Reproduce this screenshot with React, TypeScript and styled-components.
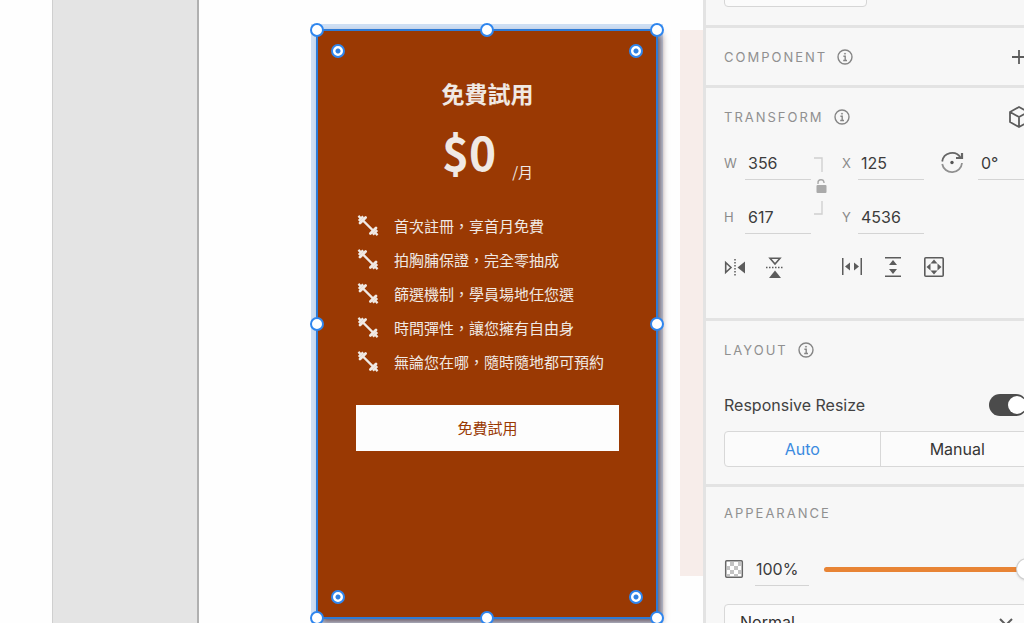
import React from 'react';
import styled, { createGlobalStyle } from 'styled-components';

const Global = createGlobalStyle`
  * { box-sizing: border-box; }
  body { margin: 0; overflow: hidden; background: #fefefe; font-family: Inter, "Liberation Sans", sans-serif; }
  button, input, select { font: inherit; color: inherit; margin: 0; }
  h2, h3, p, ul { margin: 0; padding: 0; }
  svg { display: block; flex: none; }
`;

const Workspace = styled.div`
  display: grid;
  grid-template-columns: 52px 147px minmax(0, 1fr) 321px;
  height: 100vh;
  overflow: hidden;
`;

const Pasteboard = styled.div`
  grid-column: 2;
  background: #e4e4e4;
  border-left: 1px solid #cfcfcf;
  border-right: 2px solid #b0b0b0;
`;

const Canvas = styled.main`
  display: flex;
  align-items: flex-start;
  padding: 30px 0 0 118px;
  overflow: hidden;
`;

const Neighbour = styled.div`
  flex: 1;
  height: 546px;
  margin-left: 23px;
  background: #f7edea;
`;

const Card = styled.section`
  position: relative;
  flex: none;
  display: flex;
  flex-direction: column;
  align-items: stretch;
  width: 340px;
  height: 588px;
  padding: 43px 38px 0 39px;
  background: #9a3903;
  color: #f0e9e4;
  font-family: "Noto Sans CJK TC", sans-serif;
  box-shadow: inset 0 0 0 1px #2e7bd6, 0 0 0 1px #2e7bd6, 4px 4px 7px rgba(60, 20, 20, 0.7), 0 0 0 6px #cfe0f5;
`;

const PlanName = styled.h2`
  font-size: 23px;
  line-height: 40px;
  font-weight: 700;
  text-align: center;
`;

const Price = styled.p`
  display: flex;
  justify-content: center;
  align-items: flex-end;
  gap: 16px;
  height: 72px;
`;

const Amount = styled.strong`
  font-size: 46px;
  line-height: 76px;
  font-weight: 700;
  align-self: flex-start;
`;

const Period = styled.span`
  font-size: 15px;
  line-height: 26px;
  font-weight: 400;
`;

const Features = styled.ul`
  list-style: none;
  margin-top: 23px;
`;

const Feature = styled.li`
  display: flex;
  align-items: center;
  gap: 15px;
  height: 34px;
  padding-left: 1px;
  font-size: 15px;
  white-space: nowrap;
`;

const TrialButton = styled.button`
  height: 46px;
  margin-top: 27px;
  padding: 0 0 2px;
  border: 0;
  background: #fdfdfd;
  && { color: #9a3903; font-size: 15px; }
`;

const Handle = styled.i<{ $x: string; $y: string }>`
  position: absolute;
  left: ${(p) => p.$x};
  top: ${(p) => p.$y};
  width: 14px;
  height: 14px;
  transform: translate(-50%, -50%);
  border: 2px solid #2f86ee;
  border-radius: 50%;
  background: #fff;
`;

const RadiusHandle = styled(Handle)`
  background: radial-gradient(circle, #2f80e0 2px, #fff 3px);
`;

const Inspector = styled.aside`
  overflow: hidden;
  background: #f7f7f7;
  border-left: 3px solid #e3e3e3;
  color: #424242;
`;

const Section = styled.section<{ $h: number }>`
  display: flow-root;
  width: 350px;
  height: ${(p) => p.$h}px;
  padding: 0 19px 0 18px;
  border-bottom: 3px solid #e3e3e3;
`;

const FieldStub = styled.input`
  display: block;
  width: 143px;
  height: 36px;
  && { margin-top: -29px; }
  border: 1px solid #d6d6d6;
  border-radius: 4px;
  background: #fbfbfb;
`;

const SectionHead = styled.header<{ $h: number }>`
  display: flex;
  align-items: center;
  gap: 10px;
  height: ${(p) => p.$h}px;
`;

const SectionTitle = styled.h3`
  color: #909090;
  font-size: 13px;
  line-height: 20px;
  font-weight: 400;
  letter-spacing: 2px;
`;

const IconButton = styled.button`
  display: flex;
  align-items: center;
  justify-content: center;
  width: 24px;
  height: 24px;
  padding: 0;
  border: 0;
  background: none;
  && { margin: 0 6px 0 auto; color: #5c5c5c; }
`;

const TransformGrid = styled.div`
  display: grid;
  grid-template-columns: 87px 31px 82px 16px 90px;
  grid-template-rows: 34px 34px;
  row-gap: 20px;
`;

const Field = styled.label<{ $lead?: number }>`
  display: grid;
  grid-template-columns: ${(p) => p.$lead ?? 21}px 66px;
  align-items: center;
  width: max-content;
  color: #8a8a8a;
  font-size: 13px;
`;

const ValueInput = styled.input`
  width: 100%;
  height: 34px;
  padding: 0 0 0 3px;
  border: 0;
  border-bottom: 1px solid #d4d4d4;
  background: none;
  outline: 0;
  && { color: #3c3c3c; font-size: 16px; }
`;

const OpacityInput = styled(ValueInput)`
  padding: 0 0 0 1px;
`;

const LinkRatio = styled.div`
  grid-row: 1 / 3;
  grid-column: 2;
  padding: 11px 0 0 2px;
`;

const Rotation = styled(Field)`
  grid-column: 5;
`;

const ToolRow = styled.div<{ $gap: number }>`
  display: flex;
  align-items: center;
  gap: ${(p) => p.$gap}px;
`;

const Tools = styled.div`
  display: grid;
  grid-template-columns: 117px auto;
  justify-content: start;
  margin-top: 21px;
`;

const ToolButton = styled(IconButton)`
  width: 22px;
  &&& { margin: 0; }
`;

const ResizeRow = styled.label`
  display: flex;
  align-items: center;
  justify-content: space-between;
  height: 24px;
  margin-top: 14px;
  font-size: 16px;
`;

const Switch = styled.input`
  appearance: none;
  width: 38px;
  height: 22px;
  border-radius: 11px;
  background: #4b4b4b;
  && { margin-right: 10px; }
  &::before {
    content: "";
    display: block;
    width: 18px;
    height: 18px;
    margin: 2px 0 0 19px;
    border-radius: 50%;
    background: #fff;
  }
`;

const Segments = styled.div`
  display: grid;
  grid-template-columns: 1fr 1fr;
  height: 36px;
  margin: 14px 2px 0 0;
  border: 1px solid #d8d8d8;
  border-radius: 4px;
  background: #fbfbfb;
`;

const Segment = styled.button<{ $active?: boolean }>`
  border: 0;
  background: none;
  && { color: ${(p) => (p.$active ? '#3a8ae0' : '#363636')}; font-size: 16px; }
  & + & { border-left: 1px solid #d8d8d8; }
`;

const OpacityRow = styled.div`
  display: grid;
  grid-template-columns: 31px 54px 1fr;
  align-items: center;
  margin-top: 13px;
`;

const Slider = styled.input`
  appearance: none;
  width: 213px;
  height: 20px;
  background: none;
  && { margin-left: 15px; }
  &::-webkit-slider-runnable-track {
    height: 5px;
    border-radius: 3px;
    background: #e88435;
  }
  &::-webkit-slider-thumb {
    appearance: none;
    width: 20px;
    height: 20px;
    margin-top: -8px;
    border-radius: 50%;
    background: #fff;
    box-shadow: 0 0 0 1px #cfcfcf, 0 1px 3px rgba(0, 0, 0, 0.3);
  }
`;

const BlendWrap = styled.div`
  position: relative;
  margin-top: 18px;
  & > svg { position: absolute; left: 274px; top: 10px; }
`;

const BlendSelect = styled.select`
  appearance: none;
  display: block;
  width: 100%;
  height: 36px;
  padding: 0 15px;
  border: 1px solid #d8d8d8;
  border-radius: 4px;
  background: #fbfbfb;
  && { color: #303030; font-size: 16px; }
`;

const Info = () => (
  <svg width="16" height="16" viewBox="0 0 16 16" fill="none" stroke="#858585" strokeWidth="1.4">
    <circle cx="8" cy="8" r="7" />
    <path d="M6.4 7.2H8.2V11.4M6.2 11.5H10" />
    <circle cx="8" cy="4.7" r=".6" fill="#858585" strokeWidth=".7" />
  </svg>
);

const Dumbbell = () => (
  <svg width="22" height="22" viewBox="0 0 22 22" fill="none" stroke="currentColor">
    <path d="M6 6.500L16 16.500" strokeWidth="2.4" />
    <path d="M3 9L8.600 3.400M13.400 19.600L19 14" strokeWidth="2.8" strokeLinecap="round" />
    <path d="M1.800 6.800L6.200 2.400M15.800 20.600L20.200 16.200" strokeWidth="2.6" />
    <path d="M1.400 1.900L4.600 5.100M17.400 17.900L20.600 21.100" strokeWidth="2.2" />
  </svg>
);

const features = ['首次註冊，享首月免費', '拍胸脯保證，完全零抽成', '篩選機制，學員場地任您選', '時間彈性，讓您擁有自由身', '無論您在哪，隨時隨地都可預約'];
const handles = [['0%', '0%'], ['50%', '0%'], ['100%', '0%'], ['0%', '50%'], ['100%', '50%'], ['0%', '100%'], ['50%', '100%'], ['100%', '100%']];
const radii = [['21px', '21px'], ['calc(100% - 21px)', '21px'], ['21px', 'calc(100% - 21px)'], ['calc(100% - 21px)', 'calc(100% - 21px)']];

function Head({ title, info = true, height = 58, children }: { title: string; info?: boolean; height?: number; children?: React.ReactNode }) {
  return (
    <SectionHead $h={height}>
      <SectionTitle>{title}</SectionTitle>
      {info && <Info />}
      {children}
    </SectionHead>
  );
}

export default function App() {
  return (
    <Workspace>
      <Global />
      <Pasteboard />
      <Canvas>
        <Card lang="zh-Hant">
          <PlanName>免費試用</PlanName>
          <Price><Amount>$0</Amount><Period>/月</Period></Price>
          <Features>
            {features.map((f) => <Feature key={f}><Dumbbell />{f}</Feature>)}
          </Features>
          <TrialButton>免費試用</TrialButton>
          {handles.map(([x, y]) => <Handle key={x + y} $x={x} $y={y} />)}
          {radii.map(([x, y]) => <RadiusHandle key={x + y} $x={x} $y={y} />)}
        </Card>
        <Neighbour />
      </Canvas>
      <Inspector>
        <Section $h={28}><FieldStub aria-label="Value" /></Section>
        <Section $h={60}>
          <Head title="COMPONENT">
            <IconButton aria-label="Add component">
              <svg width="16" height="16" viewBox="0 0 16 16" stroke="currentColor" strokeWidth="1.8"><path d="M8 1V15M1 8H15" /></svg>
            </IconButton>
          </Head>
        </Section>
        <Section $h={233}>
          <Head title="TRANSFORM">
            <IconButton aria-label="3D transforms">
              <svg width="22" height="24" viewBox="0 0 22 24" fill="none" stroke="currentColor" strokeWidth="1.8" strokeLinejoin="round"><path d="M11 2L20 7V17L11 22L2 17V7ZM2 7L11 12L20 7M11 12V22" /></svg>
            </IconButton>
          </Head>
          <TransformGrid>
            <Field>W<ValueInput defaultValue="356" /></Field>
            <LinkRatio>
              <svg width="16" height="60" viewBox="0 0 16 60" fill="none" stroke="#d0d0d0" strokeWidth="1.4">
                <path d="M1 1H9V15M9 44V57H1" />
                <path d="M5 27V26A3 3 0 0 1 11 25.500V26" stroke="#aaa" />
                <rect x="3.500" y="28" width="10" height="8" rx="1" fill="#aaa" stroke="none" />
              </svg>
            </LinkRatio>
            <Field $lead={16}>X<ValueInput defaultValue="125" /></Field>
            <Rotation $lead={38}>
              <svg width="24" height="24" viewBox="0 0 24 24" fill="none" stroke="#666" strokeWidth="1.8">
                <path d="M2.200 10.500A10 10 0 0 1 20.500 6.500" />
                <path d="M22 12A10 10 0 0 1 2.200 13" stroke="#909090" />
                <path d="M22 2V7H16" strokeWidth="2.2" />
                <circle cx="12" cy="11.500" r="1.700" fill="#555" stroke="none" />
              </svg>
              <ValueInput aria-label="Rotation" defaultValue="0°" />
            </Rotation>
            <Field>H<ValueInput defaultValue="617" /></Field>
            <Field $lead={16}>Y<ValueInput defaultValue="4536" /></Field>
          </TransformGrid>
          <Tools>
            <ToolRow $gap={18}>
              <ToolButton aria-label="Flip horizontally"><svg width="22" height="20" viewBox="0 0 22 20" fill="none" stroke="#5c5c5c"><path d="M1.700 5.500L7 10.500L1.700 15.500Z" strokeWidth="1.600" /><path d="M11 2V20" strokeDasharray="1.500 1.500" strokeWidth="1.500" /><path d="M21 4.500V16.500L13.500 10.500Z" fill="#5c5c5c" stroke="none" /></svg></ToolButton>
              <ToolButton aria-label="Flip vertically"><svg width="20" height="22" viewBox="0 0 20 22" fill="none" stroke="#5c5c5c"><path d="M5 2.200H15L10 8Z" strokeWidth="1.600" /><path d="M1 11.500H19" strokeDasharray="1.500 1.500" strokeWidth="1.500" /><path d="M4 22H16L10 14.500Z" fill="#5c5c5c" stroke="none" /></svg></ToolButton>
            </ToolRow>
            <ToolRow $gap={19}>
              <ToolButton aria-label="Fix width"><svg width="22" height="20" viewBox="0 0 22 20" fill="#5c5c5c"><path d="M1 1H2.500V18H1ZM19.500 1H21V18H19.500ZM4 9.500L9 5.500V13.500ZM18 9.500L13 5.500V13.500Z" /></svg></ToolButton>
              <ToolButton aria-label="Fix height"><svg width="20" height="22" viewBox="0 0 20 22" fill="#5c5c5c"><path d="M2 1H18V2.500H2ZM2 19.500H18V21H2ZM10 4L14 9H6ZM10 18L14 13H6Z" /></svg></ToolButton>
              <ToolButton aria-label="Responsive"><svg width="22" height="22" viewBox="0 0 22 22" fill="#5c5c5c"><rect x="1.800" y="1.800" width="18.400" height="18.400" rx="1" fill="none" stroke="#5c5c5c" strokeWidth="1.600" /><path d="M11 3.500L14.500 7.500H7.500ZM11 18.500L14.500 14.500H7.500ZM3.500 11L7.500 7.500V14.500ZM18.500 11L14.500 7.500V14.500Z" /></svg></ToolButton>
            </ToolRow>
          </Tools>
        </Section>
        <Section $h={166}>
          <Head title="LAYOUT" />
          <ResizeRow>Responsive Resize<Switch type="checkbox" role="switch" defaultChecked /></ResizeRow>
          <Segments>
            <Segment $active>Auto</Segment>
            <Segment>Manual</Segment>
          </Segments>
        </Section>
        <Section $h={200}>
          <Head title="APPEARANCE" info={false} height={52} />
          <OpacityRow>
            <svg width="20" height="20" viewBox="0 0 20 20">
              <rect x="1.700" y="1.700" width="16.600" height="16.600" rx="1" fill="#fff" stroke="#666" strokeWidth="1.500" />
              <path d="M6 3h4v4H6zM14 3h3v4h-3zM3 7h3v4H3zM10 7h4v4h-4zM6 11h4v4H6zM14 11h3v4h-3zM3 15h3v2H3zM10 15h4v2h-4z" fill="#c4c4c4" />
            </svg>
            <OpacityInput aria-label="Opacity" defaultValue="100%" />
            <Slider type="range" aria-label="Opacity level" defaultValue={100} />
          </OpacityRow>
          <BlendWrap>
            <BlendSelect aria-label="Blend mode"><option>Normal</option></BlendSelect>
            <svg width="16" height="16" viewBox="0 0 16 16" fill="none" stroke="#5c5c5c" strokeWidth="2"><path d="M2 5L8 11L14 5" /></svg>
          </BlendWrap>
        </Section>
      </Inspector>
    </Workspace>
  );
}
